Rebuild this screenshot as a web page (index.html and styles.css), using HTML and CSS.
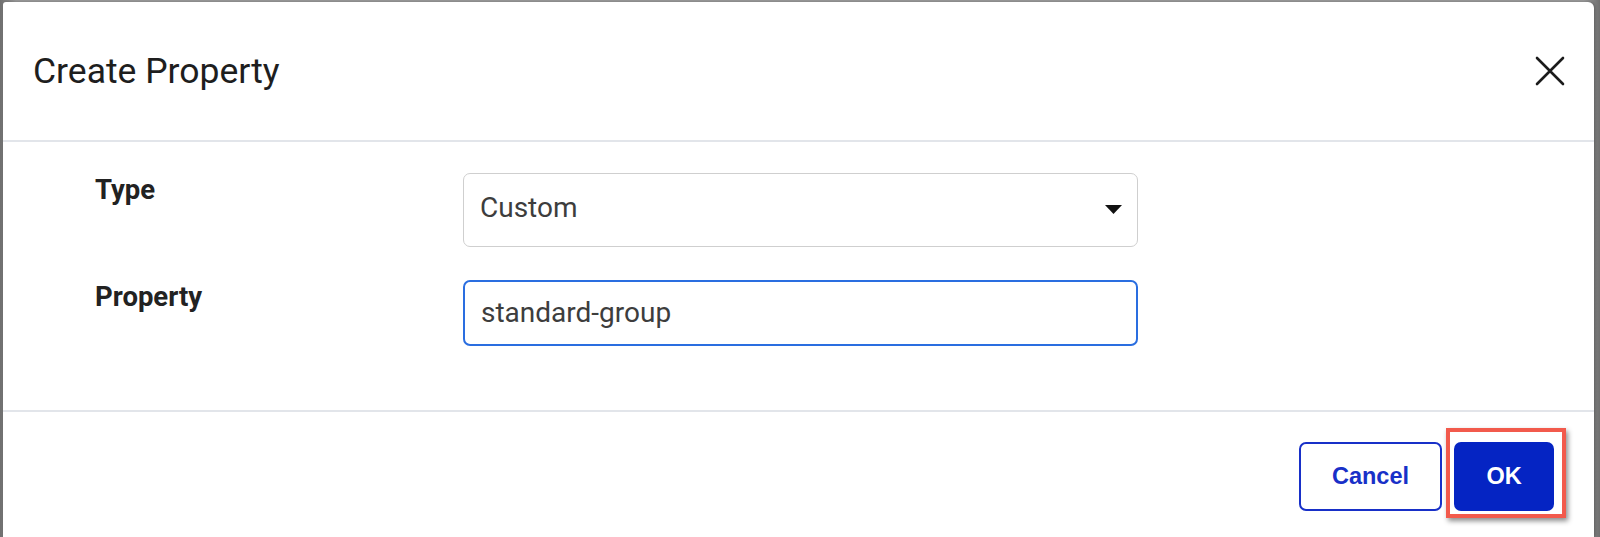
FILE: index.html
```html
<!DOCTYPE html>
<html lang="en">
<head>
  <meta charset="UTF-8">
  <title>Create Property</title>
  <link rel="stylesheet" href="styles.css">
</head>
<body>
  <div class="dialog">
    <header class="dialog-header">
      <h1>Create Property</h1>
      <button class="close-btn" aria-label="Close">
        <svg width="30" height="30" viewBox="0 0 30 30">
          <path d="M2 2 L28 28 M28 2 L2 28" stroke="#1c1c1c" stroke-width="2.6" stroke-linecap="round" fill="none"/>
        </svg>
      </button>
    </header>

    <div class="dialog-body">
      <div class="form-row">
        <label class="form-label">Type</label>
        <div class="select-box">
          <span>Custom</span>
          <svg class="caret" width="17" height="9" viewBox="0 0 17 9">
            <path d="M0 0 H17 L8.5 9 Z" fill="#111"/>
          </svg>
        </div>
      </div>
      <div class="form-row">
        <label class="form-label">Property</label>
        <div class="text-input">standard-group</div>
      </div>
    </div>

    <footer class="dialog-footer">
      <button class="btn btn-outline">Cancel</button>
      <div class="ok-wrap">
        <button class="btn btn-primary">OK</button>
        <span class="highlight"></span>
      </div>
    </footer>
  </div>
</body>
</html>
```

FILE: styles.css
```css
body {
  margin: 0;
  height: 537px;
  overflow: hidden;
  background: linear-gradient(to right, #6f6f6f, #9a9a9a 1%, #9a9a9a 99%, #6f6f6f);
  font-family: Roboto, "Liberation Sans", sans-serif;
}

.dialog {
  margin: 2px 6px 0 3px;
  height: 535px;
  background: #fff;
  border-radius: 3px 6px 0 0;
  box-shadow: 1px 0 3px rgba(0,0,0,0.25);
}

.dialog-header {
  height: 138px;
  display: flex;
  align-items: center;
  justify-content: space-between;
  padding: 0 29px 0 30px;
  border-bottom: 2px solid #e2e5ea;
}

.dialog-header h1 {
  margin: 0;
  font-size: 35.5px;
  font-weight: 400;
  color: #1e1e1e;
}

.close-btn {
  border: none;
  background: none;
  padding: 0;
  width: 30px;
  height: 30px;
  cursor: pointer;
}

.dialog-body {
  padding: 31px 0 64px 92px;
  display: flex;
  flex-direction: column;
  gap: 33px;
}

.form-row {
  display: grid;
  grid-template-columns: 368px 675px;
  align-items: start;
}

.form-label {
  font-size: 27.5px;
  font-weight: 700;
  color: #222;
  line-height: 1.2;
}

.select-box, .text-input {
  box-sizing: border-box;
  display: flex;
  align-items: center;
  justify-content: space-between;
  padding: 0 15px 0 16px;
  font-size: 28px;
  color: #3d3d3d;
  border-radius: 7px;
}

.select-box {
  height: 74px;
  padding-bottom: 5px;
  border: 1.5px solid #cfcfcf;
}

.select-box .caret {
  margin-top: 4px;
}

.text-input {
  height: 66px;
  padding-bottom: 2px;
  border: 2px solid #2a6ee0;
}

.dialog-footer {
  border-top: 2px solid #e2e5ea;
  display: flex;
  justify-content: flex-end;
  gap: 12px;
  padding: 30px 40px 0 0;
}

.btn {
  box-sizing: border-box;
  height: 69px;
  border-radius: 7px;
  font-family: "Liberation Sans", Arial, sans-serif;
  font-size: 23.5px;
  font-weight: 700;
  cursor: pointer;
}

.btn-outline {
  width: 143px;
  background: #fff;
  color: #1830c8;
  border: 2px solid #1830c8;
}

.btn-primary {
  width: 100px;
  background: #0524c3;
  color: #fff;
  border: none;
}

.ok-wrap {
  position: relative;
}

.highlight {
  position: absolute;
  left: -8px;
  top: -14px;
  right: -12px;
  bottom: -7px;
  border: 4px solid #f25a4c;
  box-shadow: 2px 3px 5px rgba(0,0,0,0.45);
  pointer-events: none;
}
```
